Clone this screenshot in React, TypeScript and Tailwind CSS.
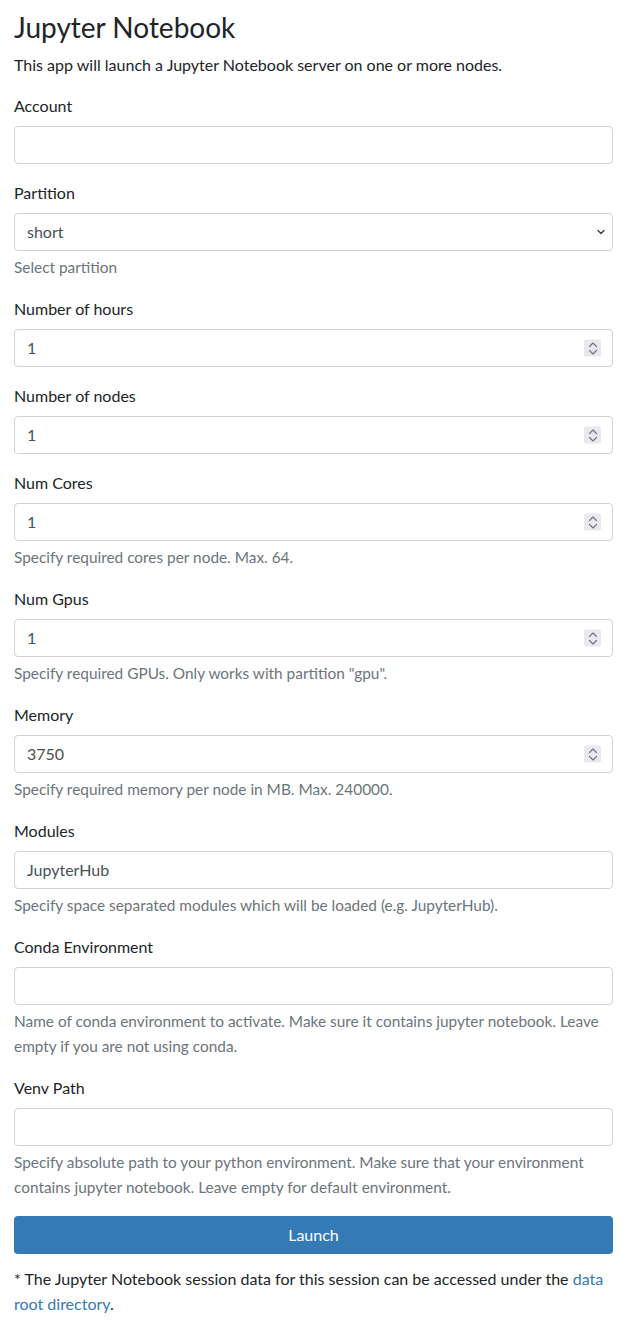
import type { ReactNode } from "react";

const font = { fontFamily: "Lato, 'Segoe UI', 'Liberation Sans', sans-serif" };

const Spinner = () => (
  <span className="pointer-events-none absolute right-[12px] top-1/2 flex h-[17px] w-[17px] -translate-y-1/2 items-center justify-center rounded-[2px] bg-[#e9e9ed]">
    <svg width="10" height="14" viewBox="0 0 10 14" fill="none" stroke="#6f6f80" strokeWidth="1.1" strokeLinecap="round" strokeLinejoin="round">
      <path d="M1.5 5 L5 1.5 L8.5 5" />
      <path d="M1.5 9 L5 12.5 L8.5 9" />
    </svg>
  </span>
);

const Field = ({
  label,
  value,
  number,
  select,
  help,
}: {
  label: string;
  value?: string;
  number?: boolean;
  select?: boolean;
  help?: ReactNode;
}) => (
  <div className="mb-4">
    <label className="mb-2 block text-[16px] leading-[25px] font-normal text-[#212529]">{label}</label>
    <div className="relative">
      <div className="flex h-[38px] w-full items-center rounded-[4px] border border-[#ced4da] bg-white px-3 text-[16px] text-[#495057]">
        {value}
      </div>
      {number && <Spinner />}
      {select && (
        <svg
          className="pointer-events-none absolute right-[7px] top-1/2 -translate-y-1/2"
          width="10"
          height="8"
          viewBox="0 0 10 8"
          fill="none"
          stroke="#343a40"
          strokeWidth="1.3"
          strokeLinecap="round"
          strokeLinejoin="round"
        >
          <path d="M2 2.5 L5 5.5 L8 2.5" />
        </svg>
      )}
    </div>
    {help && <p className="mt-1 text-[15.4px] leading-[25px] text-[#6c757d]">{help}</p>}
  </div>
);

export default function App() {
  return (
    <div className="min-h-screen bg-white pl-[14px] pr-[18px] pt-[9px] text-[#212529]" style={font}>
      <h3 className="mb-[7px] text-[28px] leading-[36px] font-normal">Jupyter Notebook</h3>
      <p className="mb-4 text-[16px] leading-[25px]">
        This app will launch a Jupyter Notebook server on one or more nodes.
      </p>

      <form>
        <Field label="Account" />
        <Field label="Partition" value="short" select help="Select partition" />
        <Field label="Number of hours" value="1" number />
        <Field label="Number of nodes" value="1" number />
        <Field label="Num Cores" value="1" number help="Specify required cores per node. Max. 64." />
        <Field
          label="Num Gpus"
          value="1"
          number
          help={'Specify required GPUs. Only works with partition "gpu".'}
        />
        <Field
          label="Memory"
          value="3750"
          number
          help="Specify required memory per node in MB. Max. 240000."
        />
        <Field
          label="Modules"
          value="JupyterHub"
          help="Specify space separated modules which will be loaded (e.g. JupyterHub)."
        />
        <Field
          label="Conda Environment"
          help="Name of conda environment to activate. Make sure it contains jupyter notebook. Leave empty if you are not using conda."
        />
        <Field
          label="Venv Path"
          help="Specify absolute path to your python environment. Make sure that your environment contains jupyter notebook. Leave empty for default environment."
        />

        <button
          type="button"
          className="flex h-[38px] w-full items-center justify-center rounded-[4px] bg-[#337ab7] text-[16px] text-white"
        >
          Launch
        </button>
      </form>

      <p className="mt-3 text-[16px] leading-[25px]">
        * The Jupyter Notebook session data for this session can be accessed under the{" "}
        <a className="text-[#337ab7]">data root directory</a>.
      </p>
    </div>
  );
}
